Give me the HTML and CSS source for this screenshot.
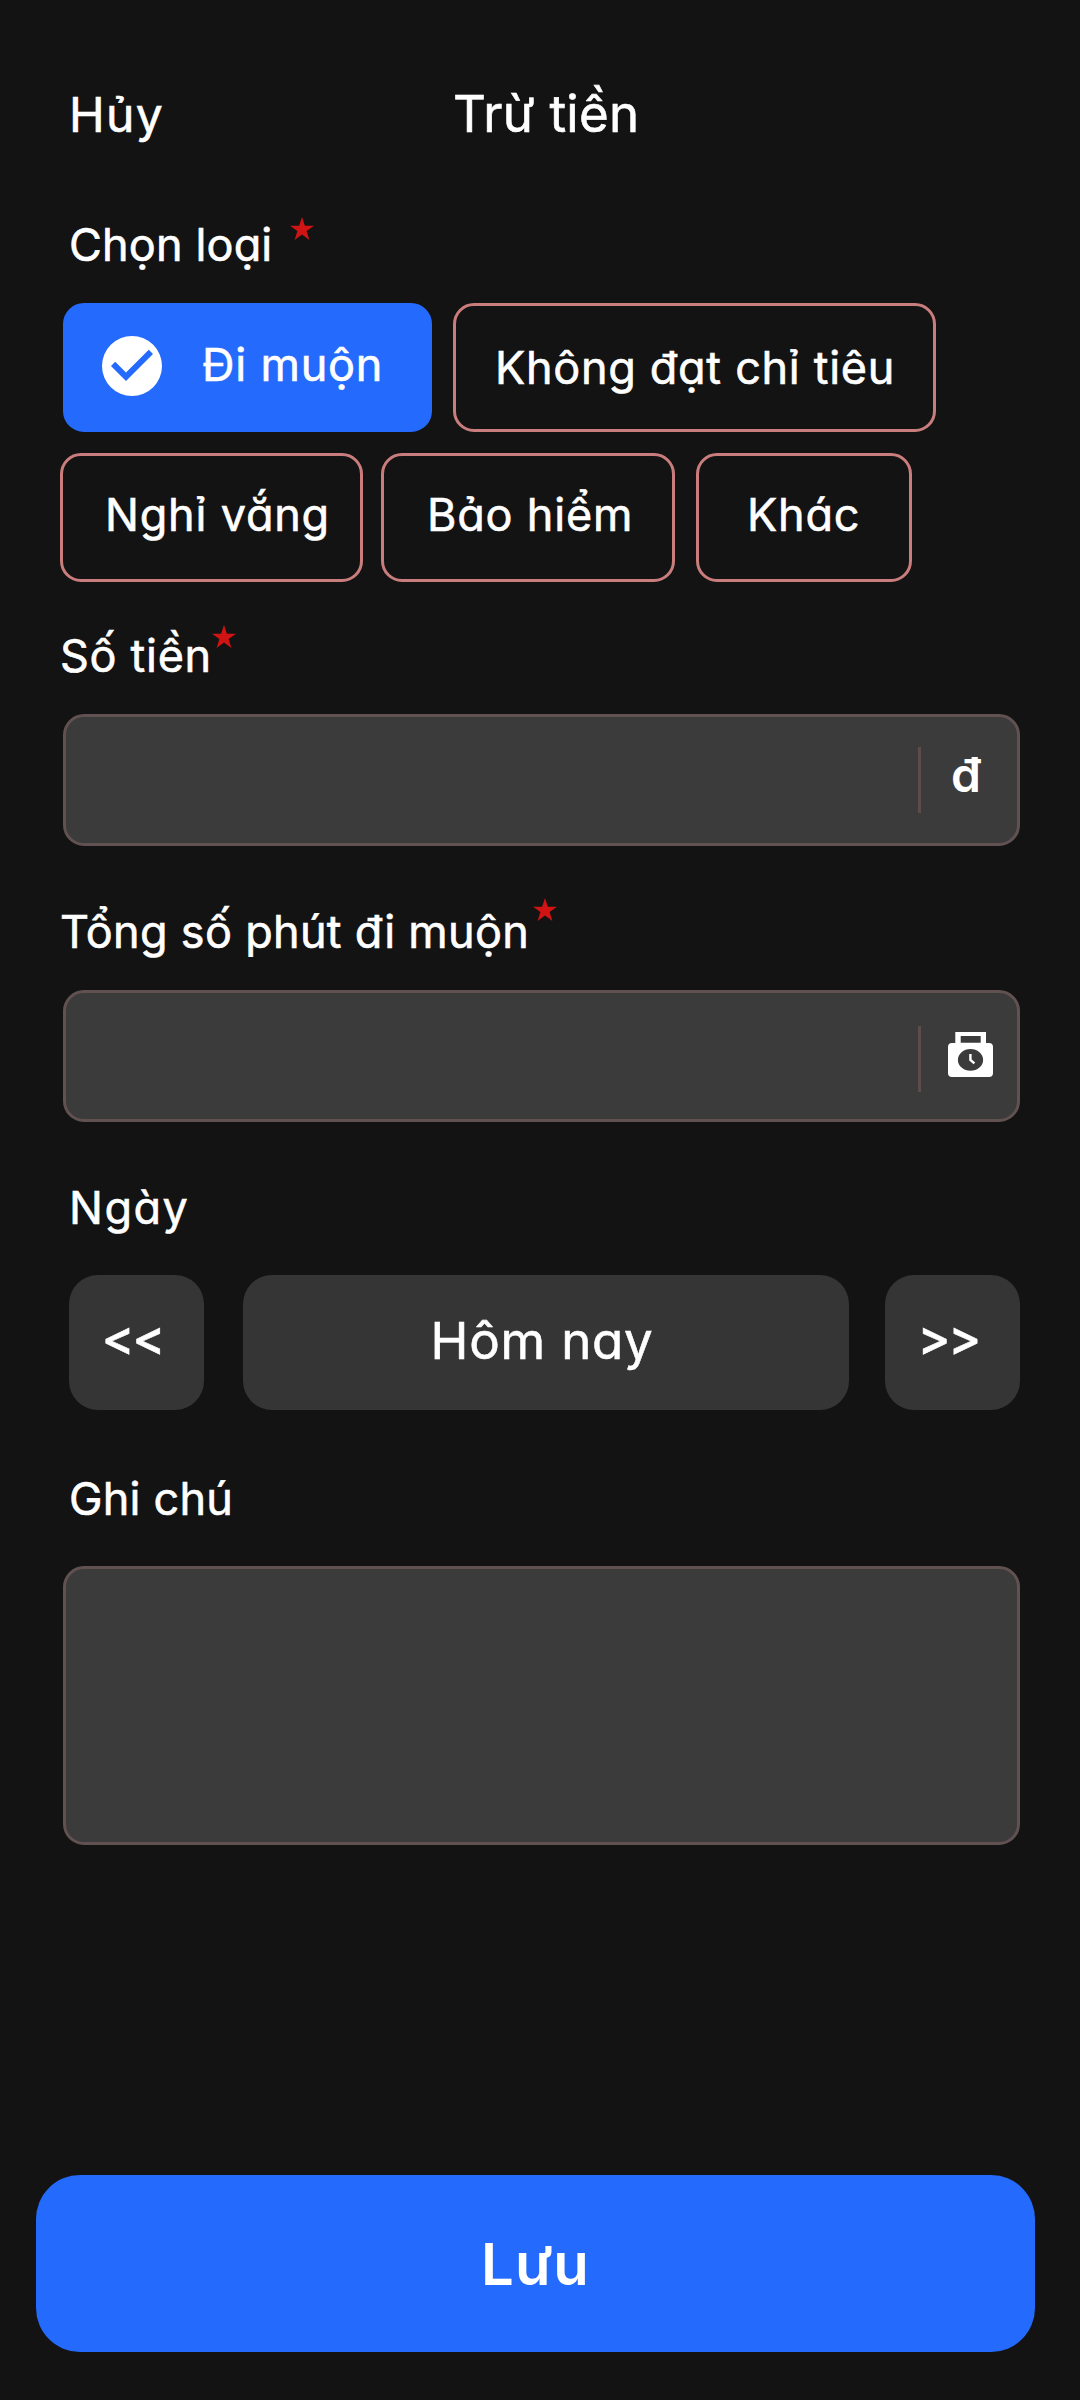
FILE: index.html
```html
<!DOCTYPE html>
<html lang="vi">
<head>
<meta charset="utf-8">
<title>Trừ tiền</title>
<link rel="stylesheet" href="styles.css">
</head>
<body>
<svg class="sprite" aria-hidden="true">
  <symbol id="star" viewBox="0 0 24 23">
    <path d="M12 0l2.9 8.7H24l-7.4 5.4L19.4 23 12 17.6 4.6 23l2.8-8.9L0 8.7h9.1z"/>
  </symbol>
</svg>
<main class="screen">
  <header class="header">
    <button class="cancel">Hủy</button>
    <h1 class="title">Trừ tiền</h1>
  </header>

  <form class="form">
    <section class="group types">
      <div class="label label-inset"><span class="t-type">Chọn loại</span><svg class="star star-type"><use href="#star"/></svg></div>
      <div class="chips chips-first">
        <button type="button" class="chip chip-selected">
          <svg class="check" viewBox="2 2 20 20"><path d="M12 2a10 10 0 1 0 0 20 10 10 0 0 0 0-20zm-2 15l-5-5 1.41-1.41L10 14.17l7.59-7.59L19 8z"/></svg>
          <span class="t-late">Đi muộn</span>
        </button>
        <button type="button" class="chip chip-target">Không đạt chỉ tiêu</button>
      </div>
      <div class="chips">
        <button type="button" class="chip chip-absent">Nghỉ vắng</button>
        <button type="button" class="chip chip-insurance">Bảo hiểm</button>
        <button type="button" class="chip chip-other">Khác</button>
      </div>
    </section>

    <section class="group">
      <div class="label"><span class="t-amount">Số tiền</span><svg class="star star-amount"><use href="#star"/></svg></div>
      <div class="field">
        <span class="divider divider-amount"></span>
        <span class="currency">đ</span>
      </div>
    </section>

    <section class="group">
      <div class="label"><span class="t-minutes">Tổng số phút đi muộn</span><svg class="star star-minutes"><use href="#star"/></svg></div>
      <div class="field">
        <span class="divider divider-minutes"></span>
        <svg class="clock" viewBox="0 0 45 45">
          <path fill="#fff" fill-rule="evenodd" d="M7.3 0H38v11h3a4 4 0 0 1 4 4v26a4 4 0 0 1-4 4H4a4 4 0 0 1-4-4V15a4 4 0 0 1 4-4h3.3zM12.7 4v6.7h20V4zM22.5 17a12.6 10.9 0 1 0 0 21.8 12.6 10.9 0 0 0 0-21.8z"/>
          <path fill="none" stroke="#fff" stroke-width="2.4" d="M22.4 22v6l4 3.4"/>
        </svg>
      </div>
    </section>

    <section class="group group-wide">
      <div class="label label-inset"><span class="t-date">Ngày</span></div>
      <div class="dates">
        <button type="button" class="date-btn">&lt;&lt;</button>
        <button type="button" class="date-btn today">Hôm nay</button>
        <button type="button" class="date-btn">&gt;&gt;</button>
      </div>
    </section>

    <section class="group group-wide group-note">
      <div class="label label-inset"><span class="t-note">Ghi chú</span></div>
      <div class="field note"></div>
    </section>
  </form>

  <button class="save">Lưu</button>
</main>
</body>
</html>
```
FILE: styles.css
```css
* { box-sizing: border-box; }

body {
  margin: 0;
  background: #131313;
  color: #fff;
  font: 400 45px/56px Inter, "Noto Sans", sans-serif;
  font-feature-settings: "cv11" 1;
  -webkit-text-stroke: 0.6px #fff;
}

button {
  margin: 0;
  padding: 0;
  border: 0;
  background: none;
  color: inherit;
  font: inherit;
  font-feature-settings: inherit;
  white-space: nowrap;
}

.sprite { display: none; }

.screen {
  display: flex;
  flex-direction: column;
  width: 1080px;
  height: 2400px;
  padding: 84px 45px 48px 36px;
}

/* Header */
.header {
  display: flex;
  align-items: baseline;
  height: 60px;
  padding-left: 33px;
}
.cancel {
  width: 384px;
  text-align: left;
  font-size: 48px;
  line-height: 60px;
  letter-spacing: 1.3px;
}
.title {
  margin: 0;
  font-size: 51px;
  font-weight: 400;
  line-height: 60px;
  letter-spacing: 0.3px;
}

/* Form */
.form {
  display: flex;
  flex-direction: column;
  gap: 58px;
  margin-top: 73px;
  padding: 0 15px 0 24px;
}
.group {
  display: flex;
  flex-direction: column;
  gap: 30px;
}
.group-wide { gap: 39px; }
.group-note { margin-top: 3px; }
.types {
  gap: 21px;
  margin-bottom: -12px;
}

.label {
  display: flex;
  align-items: flex-start;
  height: 56px;
}
.label-inset { padding-left: 9px; }
.star {
  width: 24px;
  height: 23px;
  fill: #d01414;
}
.star-type { margin-left: 18px; }
.star-amount { margin: -3px 0 0 0; }
.star-minutes { margin: -6px 0 0 4px; }
.t-type { letter-spacing: 0.15px; }
.t-amount { letter-spacing: 0.7px; }
.t-minutes { letter-spacing: 0.3px; }
.t-date { letter-spacing: 1.5px; }
.t-note { letter-spacing: 0.2px; }

/* Type chips */
.chips { display: flex; }
.chips-first {
  gap: 21px;
  margin: 9px 0 0 3px;
}
.chip {
  display: flex;
  align-items: center;
  height: 129px;
  padding-bottom: 5px;
  border: 3px solid #c97d7d;
  border-radius: 21px;
  letter-spacing: 0.8px;
}
.chip-selected {
  gap: 40px;
  width: 369px;
  padding: 0 0 3px 36px;
  border-color: #246bfd;
  background: #246bfd;
}
.t-late {
  margin-top: -2px;
  letter-spacing: 0.8px;
}
.check {
  width: 60px;
  height: 60px;
  fill: #fff;
}
.chip-target {
  width: 483px;
  padding: 0 0 0 39px;
  letter-spacing: 0.7px;
}
.chip-absent {
  width: 303px;
  padding-left: 42px;
}
.chip-insurance {
  width: 294px;
  margin-left: 18px;
  padding-left: 43px;
}
.chip-other {
  width: 216px;
  margin-left: 21px;
  padding-left: 48px;
}

/* Fields */
.field {
  display: flex;
  justify-content: flex-end;
  height: 132px;
  margin-left: 3px;
  border: 3px solid #625151;
  border-radius: 21px;
  background: #3b3b3b;
}
.divider {
  width: 3px;
  height: 66px;
  background: #5d4c4c;
}
.divider-amount { margin-top: 30px; }
.divider-minutes { margin-top: 33px; }
.currency {
  width: 66px;
  margin: 30px 0 0 30px;
  font-size: 48px;
  font-weight: 600;
  -webkit-text-stroke: 0;
}
.clock {
  width: 45px;
  height: 45px;
  margin: 39px 24px 0 27px;
}
.note { height: 279px; }

/* Date picker */
.dates {
  display: flex;
  padding-left: 9px;
}
.date-btn {
  width: 135px;
  height: 135px;
  padding: 0 8px 10px 0;
  border-radius: 29px;
  background: #353535;
  font-size: 49px;
  font-weight: 500;
  letter-spacing: -2px;
}
.today {
  width: 606px;
  margin: 0 36px 0 39px;
  padding: 0 8px 4px 0;
  font-size: 51px;
  font-weight: 400;
  letter-spacing: 0.8px;
}

/* Save */
.save {
  width: 999px;
  height: 177px;
  margin-top: auto;
  border-radius: 44px;
  background: #246bfd;
  font-size: 58px;
  font-weight: 600;
  line-height: 72px;
  letter-spacing: 1px;
  -webkit-text-stroke: 0;
}
```
